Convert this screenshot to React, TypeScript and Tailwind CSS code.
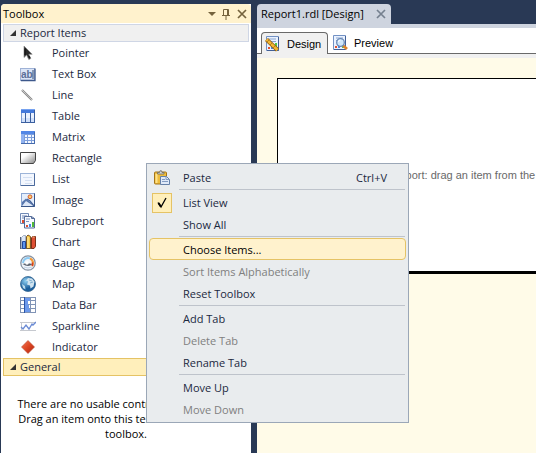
import type { ReactNode } from "react";

function Icon({ children, crisp = false }: { children: ReactNode; crisp?: boolean }) {
  return (
    <svg
      className="size-4 shrink-0"
      viewBox="0 0 16 16"
      fill="none"
      shapeRendering={crisp ? "crispEdges" : "auto"}
      aria-hidden="true"
    >
      {children}
    </svg>
  );
}

const PointerIcon = () => (
  <Icon>
    <path d="M4 1v11.500l2.600-2.400 2.200 4.400 2-1-2-4.300h3.400z" fill="#2a2a2a" stroke="#8a8a8a" strokeWidth=".7" />
    <path d="M5 3.500v6.500M9 11l1 2" stroke="#0b0b0b" />
  </Icon>
);

const TextBoxIcon = () => (
  <Icon>
    <rect x=".5" y="2.500" width="14" height="12" fill="#dbe5f7" stroke="#9fb2d6" />
    <path d="M1 14.500h14v-12" stroke="#3d588b" strokeWidth="1.300" />
    <text x="1" y="12" fontSize="10" fontWeight="bold" fill="#5b6f98" fontFamily="'Liberation Sans', Arial, sans-serif">ab</text>
    <path d="M13 4v9" stroke="#33486f" />
  </Icon>
);

const LineIcon = () => (
  <Icon>
    <path d="M2 3l10 10" stroke="#888" strokeWidth="2.200" />
    <path d="M2 3l10 10" stroke="#fff" strokeWidth=".8" strokeDasharray="1 .6" />
  </Icon>
);

const TableIcon = () => (
  <Icon crisp>
    <rect x="1" y="1" width="14" height="14" fill="#7a9ad2" />
    <rect x="1" y="1" width="14" height="4" fill="#4379dc" />
    <rect x="1" y="1" width="14" height="1" fill="#76a2f0" />
    <path d="M2 5h3v9H2zM6 5h4v9H6zM11 5h3v9h-3z" fill="#e9f1ff" />
    <path d="M2 10h3v4H2zM6 10h4v4H6zM11 10h3v4h-3z" fill="#d1e0fa" />
    <path d="M5.500 5v10M10.500 5v10M14.500 2v13M1 14.500h14" stroke="#3b5f9f" />
  </Icon>
);

const MatrixIcon = () => (
  <Icon crisp>
    <rect x="1" y="2" width="14" height="13" fill="#7d9edb" />
    <rect x="1" y="2" width="14" height="3" fill="#5387e6" />
    <rect x="1" y="5" width="3" height="9" fill="#91b3f1" />
    <path d="M5 6h2v2H5zM8 6h3v2H8zM12 6h2v2h-2zM5 9h2v2H5zM8 9h3v2H8zM12 9h2v2h-2zM5 12h2v2H5zM8 12h3v2H8zM12 12h2v2h-2z" fill="#f3f8ff" />
    <path d="M14.500 3v12M1 14.500h14" stroke="#466bad" />
  </Icon>
);

const RectangleIcon = () => (
  <Icon>
    <defs>
      <linearGradient id="rectangle-fill" x1="0" y1="0" x2="1" y2="1">
        <stop offset=".3" stopColor="#fff" />
        <stop offset="1" stopColor="#888" />
      </linearGradient>
    </defs>
    <path d="M.5 2.500h15v8l-2 3H.5z" fill="url(#rectangle-fill)" stroke="#444" />
  </Icon>
);

const ListIcon = () => (
  <Icon>
    <rect x=".5" y="2.500" width="14" height="12" fill="#f3f7fe" stroke="#9db4d8" />
    <path d="M1 14.500h13.500v-12" stroke="#4c6a9c" />
    <path d="M3 6.500h9M5 9.500h7M5 12.500h7" stroke="#d3dff2" />
  </Icon>
);

const ImageIcon = () => (
  <Icon>
    <rect x="1.500" y="1.500" width="13" height="13" fill="#e4eefc" stroke="#8ba6d2" />
    <path d="M2 10l4-3.500L14 13.500v.5H2z" fill="#5877ae" />
    <path d="M2 14l4-5 3 2 5 3z" fill="#dde7f7" />
    <path d="M7 7l3 2 4 5" stroke="#48659b" strokeWidth="1.400" />
    <circle cx="10" cy="4.800" r="1.900" fill="#ffcf68" stroke="#d3592c" />
    <path d="M1 14.500h13.500v-13" stroke="#3a5688" />
  </Icon>
);

const SubreportIcon = () => (
  <Icon>
    <path d="M.5 .5h8v10h-8z" fill="#f5f8ff" stroke="#718bb6" />
    <path d="M2 3h5M2 5h2" stroke="#6e86b1" />
    <path d="M2 7h2v3H2z" fill="#dd4c2d" />
    <path d="M5 5h2v5H5z" fill="#50a638" />
    <path d="M4.500 3.500h7l3 2v9.500h-10z" fill="#f7faff" stroke="#536b99" />
    <path d="M11.500 3.500v2h3" stroke="#536b99" />
    <path d="M6 6h4M6 8.500h3" stroke="#7d96c2" />
    <path d="M6 12h2v2H6z" fill="#e05030" />
    <path d="M9 11h2v3H9z" fill="#4787e8" />
    <path d="M12 9h2v5h-2z" fill="#50b837" />
  </Icon>
);

const ChartIcon = () => (
  <Icon>
    <path d="M.5 3v12M1 14.500h12" stroke="#55607a" />
    <path d="M1.500 3.500l2-2h2v13h-4z" fill="#dce7f8" stroke="#8595af" strokeWidth=".7" />
    <path d="M2.500 7.500h3v7h-3z" fill="#5d94ec" stroke="#22489c" />
    <path d="M6.500 2.500l1.500-1.500 2.500 1.500v12h-4z" fill="#f8c544" stroke="#7c5927" />
    <path d="M8 3v11" stroke="#fff1ae" />
    <path d="M11.500 4l1-1.500h3v10l-1.500 2h-2.500z" fill="#df5035" stroke="#7d3018" />
    <path d="M12.500 3h2" stroke="#f4c18b" />
  </Icon>
);

const GaugeIcon = () => (
  <Icon>
    <circle cx="8" cy="8" r="7.200" fill="#f0f4fa" stroke="#8592a3" strokeWidth="1.300" />
    <path d="M3 8a5 5 0 0 1 7-4.600" stroke="#8bcaf3" strokeWidth="2" />
    <path d="M10 3.400a5 5 0 0 1 2 7.600" stroke="#f29938" strokeWidth="2.200" />
    <path d="M2.500 9q6 4 10 0L7 8z" fill="#59616e" />
    <path d="M12.500 7.500v3.500" stroke="#d23c25" strokeWidth="1.500" />
    <circle cx="7" cy="8" r="1.800" fill="#fff" />
    <path d="M4 12q4 2 8 0" stroke="#c4d3e6" />
  </Icon>
);

const MapIcon = () => (
  <Icon>
    <defs>
      <radialGradient id="globe" cx=".35" cy=".3">
        <stop offset="0" stopColor="#8fd0f2" />
        <stop offset="1" stopColor="#1c5f9c" />
      </radialGradient>
    </defs>
    <circle cx="8" cy="8" r="7.500" fill="url(#globe)" stroke="#34658f" strokeWidth=".8" />
    <path d="M8 2l4 .5 2.500 3-1 5-3 2-.5-3-3-1 1-3-2-1z" fill="#d0e3ef" />
    <path d="M2 8l3 2 .5 3.500L3 12z" fill="#badbed" />
    <path d="M9 4l3 1M10 7l3-1" stroke="#6da4c9" strokeWidth=".8" />
  </Icon>
);

const DataBarIcon = () => (
  <Icon crisp>
    <rect width="16" height="16" fill="#fff" />
    <path d="M0 .5h16M.5 0v16M15.500 0v16M0 15.500h16M0 3.500h16M0 7.500h16M0 11.500h16M10.500 0v16" stroke="#8194b6" />
    <path d="M5 1h5v3H5zM5 4h3v4H5zM5 8h4v4H5zM5 12h5v3H5z" fill="#6d9aec" />
    <path d="M4.500 0v16" stroke="#2954a9" />
  </Icon>
);

const SparklineIcon = () => (
  <Icon>
    <path d="M1.500 4v9M0 4.500h16M0 12.500h16" stroke="#c6c9cf" />
    <path d="M1 9l2 2 3-4 3 4 3-5 1 1 3-3" stroke="#6b8bd4" strokeWidth="1.300" />
  </Icon>
);

const IndicatorIcon = () => (
  <Icon>
    <defs>
      <linearGradient id="diamond" x1="0" y1="0" x2="1" y2="1">
        <stop offset="0" stopColor="#f27955" />
        <stop offset=".5" stopColor="#dc4522" />
        <stop offset="1" stopColor="#ad2410" />
      </linearGradient>
    </defs>
    <path d="M8 1.500L14.500 8 8 14.500 1.500 8z" fill="url(#diamond)" stroke="#b8442b" strokeWidth=".6" />
  </Icon>
);

function ReportPage() {
  return (
    <>
      <path d="M1.500 .5h12v14h-12z" fill="#eaf2ff" stroke="#7291c4" />
      <path d="M13.500 1v13.500H2" stroke="#405f96" />
      <path d="M4 3h7M4 5.500h7" stroke="#8ba6d0" />
      <path d="M3 11h2v2H3z" fill="#e1502d" />
      <path d="M6 10h2v3H6z" fill="#4c86df" />
      <path d="M10 7h2v6h-2z" fill="#51c944" />
    </>
  );
}

const DesignIcon = () => (
  <Icon>
    <ReportPage />
    <path d="M1.500 3.500l11 10.500" stroke="#8a5b12" strokeWidth="4.400" />
    <path d="M1.500 3.500l11 10.500" stroke="#f2b632" strokeWidth="2.800" />
    <path d="M2 6l2-2M5 9l2-2M8 12l2-2" stroke="#9a6a1c" strokeWidth=".7" />
  </Icon>
);

const PreviewIcon = () => (
  <Icon>
    <ReportPage />
    <path d="M11 10.500l4 3.500" stroke="#dd812a" strokeWidth="2.800" />
    <circle cx="8.500" cy="7.500" r="3.800" fill="#cfe7fb" stroke="#6887b4" strokeWidth="1.300" />
    <path d="M6.500 7a2 2 0 0 1 2-2" stroke="#fff" />
  </Icon>
);

const PasteIcon = () => (
  <Icon>
    <rect x=".5" y="2" width="12" height="12" rx="1" fill="#eebc3c" stroke="#a47418" />
    <path d="M2.500 4v9" stroke="#ffe28a" strokeWidth="2" />
    <path d="M3.500 4V2.500h2L6 .8h1.500l.5 1.700h2V4z" fill="#d6d8dc" stroke="#6d6a60" strokeWidth=".8" />
    <path d="M6.500 6.500h6l3 3v5h-9z" fill="#dfe9f8" stroke="#6580a8" />
    <path d="M12 6.500v3h3M8 9.500h3M8 11.500h6" stroke="#839cc3" />
  </Icon>
);

const tools = [
  { name: "Pointer", Glyph: PointerIcon },
  { name: "Text Box", Glyph: TextBoxIcon },
  { name: "Line", Glyph: LineIcon },
  { name: "Table", Glyph: TableIcon },
  { name: "Matrix", Glyph: MatrixIcon },
  { name: "Rectangle", Glyph: RectangleIcon },
  { name: "List", Glyph: ListIcon },
  { name: "Image", Glyph: ImageIcon },
  { name: "Subreport", Glyph: SubreportIcon },
  { name: "Chart", Glyph: ChartIcon },
  { name: "Gauge", Glyph: GaugeIcon },
  { name: "Map", Glyph: MapIcon },
  { name: "Data Bar", Glyph: DataBarIcon },
  { name: "Sparkline", Glyph: SparklineIcon },
  { name: "Indicator", Glyph: IndicatorIcon },
];

function GroupHeader({ title, selected = false }: { title: string; selected?: boolean }) {
  return (
    <button
      type="button"
      aria-expanded="true"
      className={`flex h-[18px] w-full items-center gap-1 border pl-1.5 text-left ${
        selected ? "border-[#e5c365] bg-[#ffefbb]" : "border-[#cfd6e5] bg-[#f0f0f0]"
      }`}
    >
      <svg className="size-1.5 shrink-0" viewBox="0 0 6 6" aria-hidden="true">
        <path d="M6 0v6H0z" fill="#333" />
      </svg>
      {title}
    </button>
  );
}

function Toolbox() {
  return (
    <section aria-label="Toolbox" className="flex w-[250px] shrink-0 flex-col rounded-tl-sm bg-white">
      <header className="flex h-[19px] shrink-0 items-center rounded-t-sm bg-[#fff2cd] pr-[3px] pl-0.5 text-black">
        <h2 className="flex-1">Toolbox</h2>
        <div className="flex items-center gap-1 text-[#75633d]">
          <button type="button" aria-label="Window position">
            <svg className="h-3 w-2" viewBox="0 0 8 12" aria-hidden="true">
              <path d="M0 4h8L4 8z" fill="currentColor" />
            </svg>
          </button>
          <button type="button" aria-label="Auto hide">
            <svg className="size-3" viewBox="0 0 12 12" fill="none" stroke="currentColor" aria-hidden="true">
              <path d="M3.500 7V1.500h5V7M2 7.500h8M6 8v4M7.500 2v5" />
            </svg>
          </button>
          <button type="button" aria-label="Close toolbox">
            <svg className="size-3" viewBox="0 0 12 12" stroke="currentColor" strokeWidth="1.700" aria-hidden="true">
              <path d="M2 2l8 8M10 2l-8 8" />
            </svg>
          </button>
        </div>
      </header>
      <div className="flex flex-col px-0.5 pt-px">
        <GroupHeader title="Report Items" />
        <ul className="pb-px">
          {tools.map(({ name, Glyph }) => (
            <li key={name}>
              <button type="button" className="flex h-[21px] w-full items-center gap-4 pl-[17px] text-left">
                <Glyph />
                {name}
              </button>
            </li>
          ))}
        </ul>
        <GroupHeader title="General" selected />
        <p className="px-2 pt-5 text-center leading-[15px] text-black">
          There are no usable controls in this group. Drag an item onto this text to add it to the toolbox.
        </p>
      </div>
    </section>
  );
}

function Designer() {
  return (
    <main className="flex min-w-0 flex-1 flex-col text-black">
      <div className="flex h-5 shrink-0">
        <div className="flex w-[134px] items-center justify-between rounded-t-sm bg-[#ced4df] pr-1 pl-1">
          <span className="whitespace-nowrap">Report1.rdl [Design]</span>
          <button type="button" aria-label="Close document" className="text-[#75808f]">
            <svg className="size-3" viewBox="0 0 12 12" stroke="currentColor" strokeWidth="1.700" aria-hidden="true">
              <path d="M2 2l8 8M10 2l-8 8" />
            </svg>
          </button>
        </div>
      </div>
      <div className="h-1 shrink-0 bg-[#ced4df]" />
      <div
        role="tablist"
        className="flex h-[26px] shrink-0 items-stretch bg-white pt-1 font-['Liberation_Sans',Arial,sans-serif]"
      >
        <div className="w-1 border-b border-[#696969]" />
        <button
          type="button"
          role="tab"
          aria-selected="true"
          className="flex w-[67px] items-center gap-1.5 rounded-t-sm border border-b-0 border-[#696969] bg-[#f0f0f0] pl-[3px]"
        >
          <DesignIcon />
          Design
        </button>
        <button
          type="button"
          role="tab"
          aria-selected="false"
          className="flex flex-1 items-center gap-1.5 border-b border-[#696969] pl-1"
        >
          <PreviewIcon />
          Preview
        </button>
      </div>
      <div className="h-1 shrink-0 bg-[#f0f0f0]" />
      <div className="flex-1 overflow-hidden bg-[#fffbe8] pt-5 pl-5">
        <div className="flex h-[196px] items-center overflow-hidden border-t border-b-3 border-l border-black bg-white pl-3 font-['Liberation_Sans',Arial,sans-serif] text-[#696969]">
          <p className="whitespace-nowrap">To add an item to the report: drag an item from the</p>
        </div>
      </div>
    </main>
  );
}

function MenuItem({
  label,
  shortcut,
  icon,
  disabled = false,
  active = false,
}: {
  label: string;
  shortcut?: string;
  icon?: ReactNode;
  disabled?: boolean;
  active?: boolean;
}) {
  return (
    <button
      type="button"
      role="menuitem"
      disabled={disabled}
      className={`flex h-[22px] w-full items-center rounded-sm border pt-px pr-[18px] text-left ${
        active ? "border-[#e5c365] bg-[#fff2cd] text-black" : "border-transparent"
      } ${disabled ? "text-[#808080]" : ""}`}
    >
      <span className="flex w-[33px] shrink-0 pl-1">{icon}</span>
      <span className="flex-1">{label}</span>
      {shortcut && <span>{shortcut}</span>}
    </button>
  );
}

function CheckedItem({ label }: { label: string }) {
  return (
    <button
      type="button"
      role="menuitemcheckbox"
      aria-checked="true"
      className="flex h-[22px] w-full items-center pt-px pl-[3px] text-left"
    >
      <span className="mr-[11px] flex size-5 items-center justify-center border border-[#e5c365] bg-[#ffefbb]">
        <svg className="size-3" viewBox="0 0 12 12" fill="none" stroke="#000" aria-hidden="true">
          <path d="M2 5.500l3 4.500L10 1" strokeWidth="1.300" />
          <path d="M2.500 6l2.300 3.500" strokeWidth="2" />
        </svg>
      </span>
      {label}
    </button>
  );
}

const Separator = () => <div role="separator" className="my-px mr-px ml-[30px] h-px bg-[#bec3cb]" />;

function ContextMenu() {
  return (
    <div
      role="menu"
      className="absolute top-[163px] left-[146px] w-[263px] border border-[#9ba7b7] bg-[#e9ecee] p-0.5 text-[#1b293e]"
    >
      <MenuItem label="Paste" shortcut="Ctrl+V" icon={<PasteIcon />} />
      <Separator />
      <CheckedItem label="List View" />
      <MenuItem label="Show All" />
      <Separator />
      <MenuItem label="Choose Items..." active />
      <MenuItem label="Sort Items Alphabetically" disabled />
      <MenuItem label="Reset Toolbox" />
      <Separator />
      <MenuItem label="Add Tab" />
      <MenuItem label="Delete Tab" disabled />
      <MenuItem label="Rename Tab" />
      <Separator />
      <MenuItem label="Move Up" />
      <MenuItem label="Move Down" disabled />
    </div>
  );
}

export default function App() {
  return (
    <div className="relative flex h-screen gap-1.5 overflow-hidden bg-[#293955] pt-1 pl-px font-['Open_Sans','Noto_Sans',sans-serif] text-[11px] leading-4 text-[#1b293e]">
      <Toolbox />
      <Designer />
      <ContextMenu />
    </div>
  );
}
